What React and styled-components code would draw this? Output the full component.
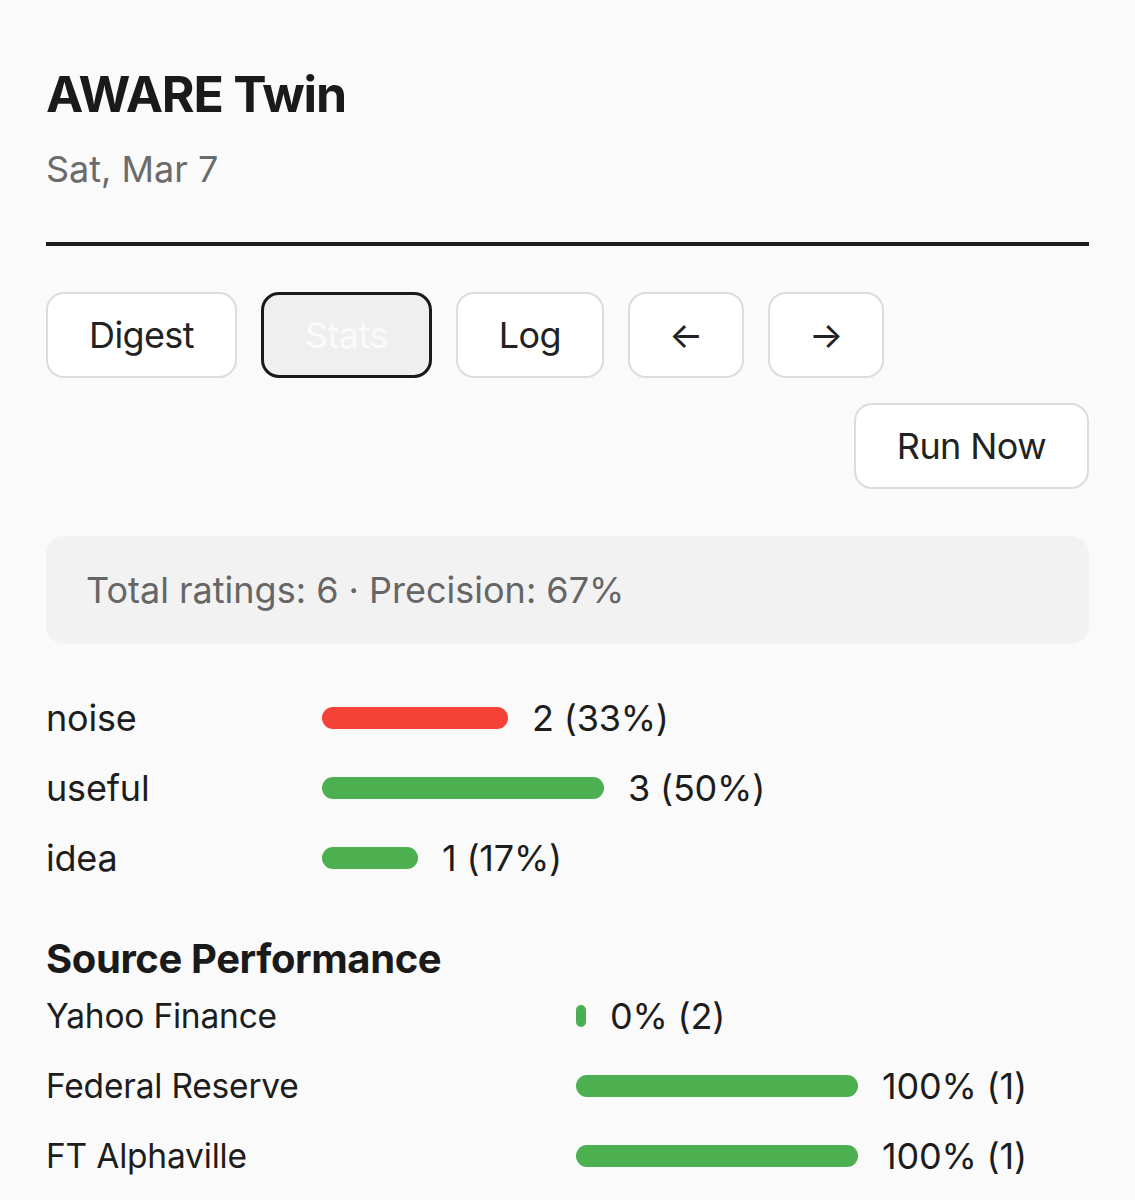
import React from 'react';
import styled, { createGlobalStyle } from 'styled-components';

const GlobalStyle = createGlobalStyle`
  html, body {
    margin: 0;
    padding: 0;
    background: #fafafa;
  }
  body {
    font-family: Inter, "Noto Sans", "Liberation Sans", sans-serif;
    color: #1d1d1d;
  }
`;

const ratings = [
    { label: 'noise', count: 2, pct: 33, color: '#f44336' },
    { label: 'useful', count: 3, pct: 50, color: '#4caf50' },
    { label: 'idea', count: 1, pct: 17, color: '#4caf50' },
];

const sources = [
    { name: 'Yahoo Finance', pct: 0, count: 2 },
    { name: 'Federal Reserve', pct: 100, count: 1 },
    { name: 'FT Alphaville', pct: 100, count: 1 },
];

const App = () => {
    return (
        <Page>
            <GlobalStyle />
            <Title>AWARE Twin</Title>
            <DateLine>Sat, Mar 7</DateLine>
            <Divider />

            <Toolbar>
                <Button>Digest</Button>
                <Button $active>Stats</Button>
                <Button>Log</Button>
                <Button $square>←</Button>
                <Button $square>→</Button>
                <Button $push>Run Now</Button>
            </Toolbar>

            <Summary>Total ratings: 6 · Precision: 67%</Summary>

            <Ratings>
                {ratings.map(r => (
                    <Row key={r.label} $labelWidth={276}>
                        <Label>{r.label}</Label>
                        <Bar $color={r.color} style={{ width: Math.round(r.pct * 5.64) }} />
                        <Value>{r.count} ({r.pct}%)</Value>
                    </Row>
                ))}
            </Ratings>

            <Heading>Source Performance</Heading>
            {sources.map(s => (
                <Row key={s.name} $labelWidth={530} $small>
                    <Label>{s.name}</Label>
                    <Bar $color={'#4caf50'} style={{ width: Math.max(10, Math.round(s.pct * 2.82)) }} />
                    <Value>{s.pct}% ({s.count})</Value>
                </Row>
            ))}
        </Page>
    )
}

const Page = styled.div`
  padding: 64px 46px 40px;
  background: #fafafa;
  min-height: 1200px;
  box-sizing: border-box;
`;

const Title = styled.h1`
  margin: 0;
  font-size: 50px;
  line-height: 60px;
  font-weight: 700;
  letter-spacing: -1.2px;
  color: #1a1a1a;
`;

const DateLine = styled.div`
  margin-top: 24px;
  font-size: 36px;
  line-height: 43px;
  color: #6b6b6b;
`;

const Divider = styled.div`
  margin-top: 51px;
  height: 4px;
  background: #1c1c1c;
`;

const Toolbar = styled.div`
  display: flex;
  flex-wrap: wrap;
  gap: 25px 24px;
  margin-top: 46px;
`;

const Button = styled.button`
  box-sizing: border-box;
  height: 86px;
  ${p => p.$square ? 'width: 116px; padding: 0;' : 'padding: 0 41px;'}
  ${p => p.$push && 'margin-left: auto;'}
  border-radius: 18px;
  border: ${p => p.$active ? '3px solid #1a1a1a' : '2.5px solid #dcdcdc'};
  background: ${p => p.$active ? '#efefef' : '#fff'};
  color: ${p => p.$active ? '#fafafa' : '#222'};
  font-family: inherit;
  font-size: 36px;
  letter-spacing: -0.6px;
`;

const Summary = styled.div`
  margin-top: 47px;
  height: 108px;
  display: flex;
  align-items: center;
  padding: 0 40px;
  border-radius: 18px;
  background: #f2f2f2;
  font-size: 36px;
  color: #666;
`;

const Ratings = styled.div`
  margin-top: 39px;
`;

const Row = styled.div`
  display: flex;
  align-items: center;
  height: 70px;
  font-size: 36px;
  letter-spacing: -0.2px;
  & > :first-child {
    width: ${p => p.$labelWidth}px;
    flex-shrink: 0;
    font-size: ${p => p.$small ? '33.5px' : '36px'};
  }
`;

const Label = styled.span`
  color: #1d1d1d;
`;

const Bar = styled.div`
  height: 22px;
  border-radius: 11px;
  background: ${p => p.$color};
  flex-shrink: 0;
`;

const Value = styled.span`
  margin-left: 24px;
  color: #1d1d1d;
`;

const Heading = styled.h2`
  margin: 44px 0 0;
  font-size: 40px;
  line-height: 44px;
  font-weight: 700;
  letter-spacing: -0.4px;
  color: #1a1a1a;
`;

export default App;
